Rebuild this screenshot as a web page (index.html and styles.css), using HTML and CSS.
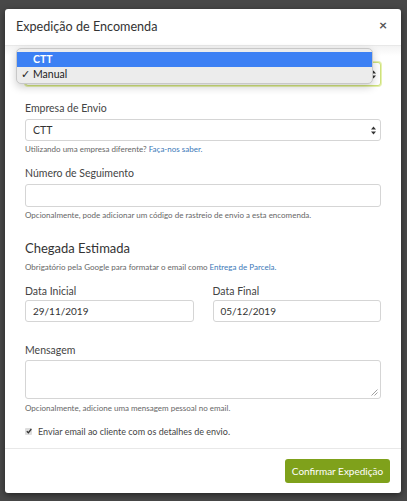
FILE: index.html
```html
<!DOCTYPE html>
<html lang="pt">
<head>
<meta charset="utf-8">
<link rel="stylesheet" href="styles.css">
</head>
<body>
<div class="modal">
  <div class="modal-header">
    <h1 class="modal-title">Expedição de Encomenda</h1>
    <span class="close">×</span>
  </div>
  <div class="modal-body">
    <div class="select select-focus">
      <span>Manual</span>
      <svg class="arrows" width="5" height="9" viewBox="0 0 5 9"><path d="M2.5 0.5L5 3.5H0Z M2.5 8.5L0 5.5H5Z" fill="#333"/></svg>
    </div>
    <div class="dropdown">
      <div class="opt opt-active">CTT</div>
      <div class="opt"><span class="check">✓</span>Manual</div>
    </div>

    <div class="field field-first">
      <label class="label">Empresa de Envio</label>
      <div class="select">
        <span>CTT</span>
        <svg class="arrows" width="5" height="9" viewBox="0 0 5 9"><path d="M2.5 0.5L5 3.5H0Z M2.5 8.5L0 5.5H5Z" fill="#333"/></svg>
      </div>
      <p class="help">Utilizando uma empresa diferente? <a class="link">Faça-nos saber.</a></p>
    </div>

    <div class="field field-second">
      <label class="label">Número de Seguimento</label>
      <div class="input"></div>
      <p class="help">Opcionalmente, pode adicionar um código de rastreio de envio a esta encomenda.</p>
    </div>

    <h2 class="section">Chegada Estimada</h2>
    <p class="help help-section">Obrigatório pela Google para formatar o email como <a class="link">Entrega de Parcela.</a></p>

    <div class="dates">
      <div class="date">
        <label class="label">Data Inicial</label>
        <div class="input input-text">29/11/2019</div>
      </div>
      <div class="date">
        <label class="label">Data Final</label>
        <div class="input input-text">05/12/2019</div>
      </div>
    </div>

    <div class="field field-msg">
      <label class="label">Mensagem</label>
      <div class="textarea">
        <svg class="grip" width="7" height="7" viewBox="0 0 7 7"><path d="M6.5 0.5L0.5 6.5M6.5 3.5L3.5 6.5" stroke="#888" stroke-width="0.8"/></svg>
      </div>
      <p class="help">Opcionalmente, adicione uma mensagem pessoal no email.</p>
    </div>

    <div class="checkrow">
      <span class="checkbox"><svg width="6" height="6" viewBox="0 0 6 6"><path d="M0.8 3.2L2.4 4.8L5.3 1" stroke="#333" stroke-width="1.3" fill="none"/></svg></span>
      <span class="checktext">Enviar email ao cliente com os detalhes de envio.</span>
    </div>
  </div>
  <div class="modal-footer">
    <button class="btn">Confirmar Expedição</button>
  </div>
</div>
</body>
</html>
```

FILE: styles.css
```css
* { box-sizing: border-box; }
html, body { margin: 0; padding: 0; }
body {
  background: #484848;
  font-family: Lato, "Liberation Sans", sans-serif;
  color: #333;
  width: 407px;
  height: 501px;
  overflow: hidden;
  padding-top: 9px;
}
.modal {
  margin: 0 6px 0 5px;
  width: 396px;
  height: 484px;
  background: #fff;
  border-radius: 3px;
  box-shadow: 0 2px 6px rgba(0,0,0,0.5);
  display: flex;
  flex-direction: column;
}
.modal-header {
  flex-shrink: 0;
  height: 37px;
  padding: 0 14px 0 11px;
  display: flex;
  align-items: center;
  justify-content: space-between;
  border-bottom: 1px solid #e8e8e8;
}
.modal-title {
  margin: 0;
  font-size: 12.6px;
  font-weight: 400;
  color: #333;
  line-height: 18px;
}
.close {
  font-size: 14px;
  font-weight: 700;
  color: #555;
  line-height: 14px;
  position: relative;
  top: -2px;
}
.modal-body {
  position: relative;
  padding: 16px 20px 0;
  flex: 1;
  background: linear-gradient(#f3f3f3, #fff 10px);
}
.select, .input {
  height: 23px;
  border: 1px solid #d5d5d5;
  border-radius: 3px;
  background: #fff;
  display: flex;
  align-items: center;
  justify-content: space-between;
  padding: 0 4px 0 7px;
  font-size: 10.5px;
  color: #333;
}
.select-focus {
  height: 24px;
  border: 1px solid #cfe27c;
  box-shadow: 0 0 0 1px #e6f1b0;
}
.input-text { font-size: 10px; }
.arrows { display: block; }
.dropdown {
  position: absolute;
  left: 11px;
  top: 2px;
  width: 357px;
  height: 36px;
  background: #ececec;
  border: 1px solid #c8c8c8;
  border-radius: 5px;
  box-shadow: 0 3px 8px rgba(0,0,0,0.2);
  padding: 3px 0 0;
  font-size: 10.5px;
}
.opt {
  height: 15px;
  line-height: 15px;
  padding-left: 16px;
  color: #222;
  position: relative;
}
.opt-active {
  background: #3c80f4;
  color: #fff;
  font-weight: 700;
}
.check {
  position: absolute;
  left: 4px;
  top: 0;
}
.label {
  display: block;
  font-size: 10.5px;
  color: #444;
  line-height: 14px;
  margin-bottom: 4px;
}
.help {
  margin: 2px 0 0;
  font-size: 8px;
  color: #666;
  line-height: 12px;
}
.link { color: #3b78b8; }
.field-first { margin-top: 15px; }
.field-first .select { height: 22px; }
.field-second { margin-top: 11px; }
.section {
  margin: 18px 0 0;
  font-size: 13px;
  font-weight: 400;
  color: #333;
  line-height: 18px;
}
.help-section { margin-top: 4px; }
.dates {
  display: grid;
  grid-template-columns: 1fr 1fr;
  column-gap: 19px;
  margin-top: 11px;
}
.dates .label { margin-bottom: 2px; }
.dates .input { height: 22px; }
.field-msg { margin-top: 21px; }
.field-msg .label { margin-bottom: 3px; }
.field-msg .help { margin-top: 3px; }
.textarea {
  position: relative;
  height: 39px;
  border: 1px solid #d5d5d5;
  border-radius: 3px;
}
.grip { position: absolute; right: 2px; bottom: 2px; }
.checkrow {
  display: flex;
  align-items: center;
  gap: 6px;
  margin-top: 10px;
  height: 14px;
}
.checkbox {
  width: 7px;
  height: 7px;
  background: #ddd;
  border-radius: 1px;
  display: flex;
  align-items: center;
  justify-content: center;
}
.checktext { font-size: 9px; color: #444; }
.modal-footer {
  flex-shrink: 0;
  height: 45px;
  border-top: 1px solid #e8e8e8;
  display: flex;
  justify-content: flex-end;
  align-items: center;
  padding: 0 11px 0 0;
}
.btn {
  border: 0;
  background: #7fa11b;
  color: #fff;
  font-family: Lato, "Liberation Sans", sans-serif;
  font-size: 10px;
  height: 24px;
  width: 105px;
  border-radius: 3px;
  padding: 0;
}
```
